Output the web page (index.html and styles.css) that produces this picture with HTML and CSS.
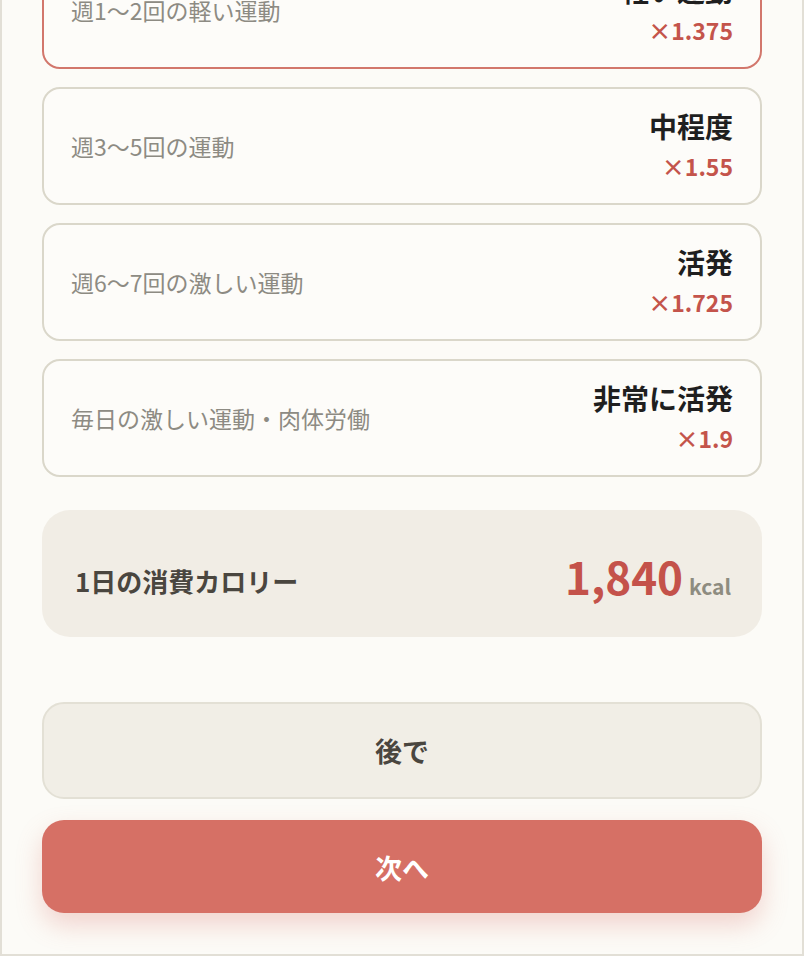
FILE: index.html
```html
<!DOCTYPE html>
<html lang="ja">
<head>
    <meta charset="UTF-8">
    <meta name="viewport" content="width=device-width, initial-scale=1.0">
    <title>活動レベル</title>
    <link rel="stylesheet" href="styles.css">
</head>
<body>
  <div class="screen">
    <div class="content">

      <!-- Activity levels -->
      <div class="levels">
        <div class="level selected">
          <span class="level-desc">週1〜2回の軽い運動</span>
          <div class="level-side">
            <span class="level-name">軽い運動</span>
            <span class="level-factor">×1.375</span>
          </div>
        </div>
        <div class="level">
          <span class="level-desc">週3〜5回の運動</span>
          <div class="level-side">
            <span class="level-name">中程度</span>
            <span class="level-factor">×1.55</span>
          </div>
        </div>
        <div class="level">
          <span class="level-desc">週6〜7回の激しい運動</span>
          <div class="level-side">
            <span class="level-name">活発</span>
            <span class="level-factor">×1.725</span>
          </div>
        </div>
        <div class="level">
          <span class="level-desc">毎日の激しい運動・肉体労働</span>
          <div class="level-side">
            <span class="level-name">非常に活発</span>
            <span class="level-factor">×1.9</span>
          </div>
        </div>
      </div>

      <!-- Result -->
      <div class="result">
        <span class="result-label">1日の消費カロリー</span>
        <span class="result-value">1,840<small>kcal</small></span>
      </div>

      <div class="actions">
        <button class="btn btn-later">後で</button>
        <button class="btn btn-next">次へ</button>
      </div>
    </div>
  </div>
</body>
</html>
```

FILE: styles.css
```css
* {
    box-sizing: border-box;
}

html, body {
    margin: 0;
    padding: 0;
}

body {
    font-family: "Noto Sans CJK JP", "Noto Sans", sans-serif;
    background-color: #fcfbf7;
    color: #1f1f1f;
}

.screen {
    height: 956px;
    overflow: hidden;
    border: 2px solid #e2dfd6;
    border-top: none;
    background-color: #fcfbf7;
}

.content {
    margin-top: -49px;
    padding: 0 40px;
}

.levels {
    display: flex;
    flex-direction: column;
    gap: 18px;
}

.level {
    display: flex;
    align-items: center;
    justify-content: space-between;
    height: 118px;
    padding: 0 27px;
    border: 2px solid #dad7ca;
    border-radius: 18px;
    background-color: #fdfcf9;
}

.level.selected {
    border-color: #d2776c;
}

.level-desc {
    font-size: 23px;
    color: #8d8b83;
}

.level-side {
    display: flex;
    flex-direction: column;
    align-items: flex-end;
}

.level-name {
    font-size: 28px;
    font-weight: 700;
    line-height: 40px;
    color: #1f1f1f;
}

.level-factor {
    font-size: 23px;
    font-weight: 700;
    line-height: 40px;
    color: #c4544b;
}

.result {
    display: flex;
    align-items: center;
    justify-content: space-between;
    height: 127px;
    margin-top: 33px;
    padding: 0 31px 0 33px;
    border-radius: 28px;
    background-color: #f1ede5;
}

.result-label {
    font-size: 26px;
    font-weight: 700;
    color: #4a463f;
    margin-top: 14px;
}

.result-value {
    font-size: 44px;
    font-weight: 700;
    color: #c4524a;
    margin-top: 4px;
}

.result-value small {
    font-size: 21px;
    color: #8e8c80;
    margin-left: 6px;
}

.actions {
    display: flex;
    flex-direction: column;
    gap: 21px;
    margin-top: 65px;
}

.btn {
    display: block;
    width: 100%;
    font-family: inherit;
    font-size: 27px;
    font-weight: 700;
    border-radius: 22px;
    cursor: pointer;
}

.btn-later {
    height: 97px;
    background: #f1eee6;
    border: 2px solid #e3e0d5;
    color: #4a463f;
}

.btn-next {
    height: 93px;
    padding-top: 2px;
    background: #d67065;
    border: none;
    color: #fff;
    box-shadow: 0 12px 26px rgba(214, 112, 101, 0.28);
}
```
